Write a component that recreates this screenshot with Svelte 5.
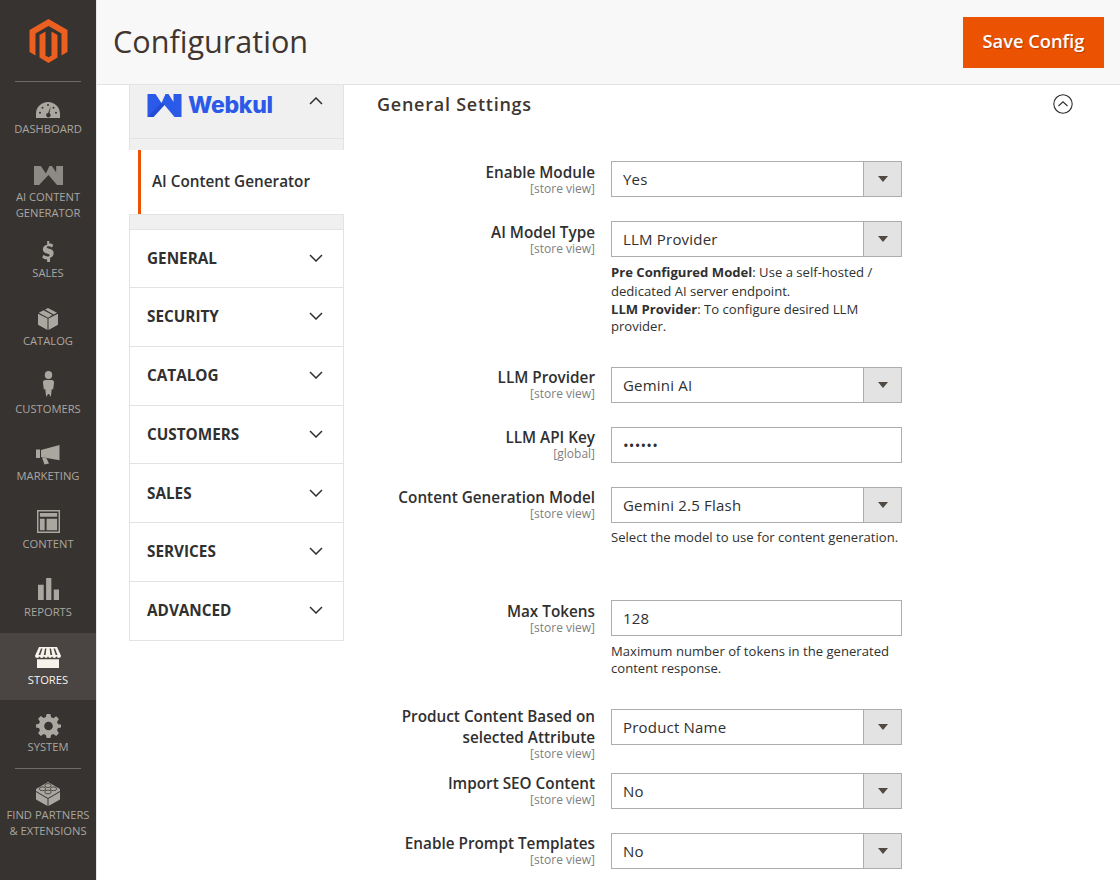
<script lang="ts">
	const wMark = 'M0 0h8l6 9 4-9h3l5 8V0h8v23h-7L17 11 6 23H0Z';

	const navTop = [
		{ label: 'Dashboard', cls: '', vb: '0 0 24 16', d: 'M12 0C5.4 0 0 5.2 0 11.6V16h24v-4.400C24 5.200 18.600 0 12 0ZM4 11.800a1 1 0 1 1 0-2 1 1 0 0 1 0 2Zm2.500-5a1 1 0 1 1 0-2 1 1 0 0 1 0 2ZM12 4a1 1 0 1 1 0-2 1 1 0 0 1 0 2Zm5.500 2.800a1 1 0 1 1 0-2 1 1 0 0 1 0 2ZM20 11.800a1 1 0 1 1 0-2 1 1 0 0 1 0 2ZM14.800 4.500l-1.300 6.800a2.200 2.200 0 1 1-3.200 2.400 2.200 2.200 0 0 1 1.800-2.800Z', w: 24, h: 16 },
		{ label: 'AI Content Generator', cls: 'two', vb: '0 0 34 23', d: wMark, w: 29, h: 19 },
		{ label: 'Sales', cls: '', vb: '0 0 14 24', d: 'M6 0h2.400v2.600c1.900.2 3.500.8 4.800 1.700l-1.500 3c-1.300-.9-2.700-1.400-4.100-1.400-1.300 0-2 .4-2 1.200 0 .8.900 1.200 3 1.800 3 .8 5 2.100 5 5 0 2.800-1.900 4.600-4.200 5.100V24H6v-2.800c-2.300-.2-4.300-1.100-5.800-2.400l1.700-3c1.500 1.200 3.100 1.900 4.800 1.900 1.400 0 2.200-.5 2.200-1.400 0-.9-.8-1.300-3.100-2C2.700 13.500 1 12.100 1 9.300c0-2.700 2-4.500 5-5Z', w: 12, h: 21 },
		{ label: 'Catalog', cls: '', vb: '0 0 20 23', d: 'M9.500 11V23L0 17.500V6ZM10.500 11 20 6v11.500L10.500 23ZM.8 5 5.500 2.400l9 5-4.500 2.800ZM7 1.500 10 0l9 5-3.300 1.800Z', w: 20, h: 22 },
		{ label: 'Customers', cls: '', vb: '0 0 14 26', d: 'M7 0a4 4 0 1 1 0 8 4 4 0 0 1 0-8ZM3.500 9h7c1.500 0 2.500 1 2.500 2.500l-1 7-1.500-.5-1 8-2-3H6.500l-2 3-1-8-1.500.5-1-7C1 10 2 9 3.500 9Z', w: 13, h: 26 },
		{ label: 'Marketing', cls: '', vb: '0 0 24 20', d: 'M0 4.500h4V13H0ZM5 5 23.500 0V15.300L5 12ZM6 12.500 8.500 19.500 13 18.500 10.500 13.300Z', w: 24, h: 20 },
		{ label: 'Content', cls: '', vb: '0 0 24 24', d: 'M0 0h24v24H0ZM1.500 1.500v21h21v-21ZM3 3h18v4H3ZM3 9h5v12H3ZM10 9h11v12H10Z', w: 23, h: 23 },
		{ label: 'Reports', cls: '', vb: '0 0 22 23', d: 'M0 7h6v16H0ZM8.500 0h5.500v23H8.500ZM16.500 12H22v11h-5.500Z', w: 21, h: 22 },
		{ label: 'Stores', cls: 'active', vb: '0 0 26 24', d: 'M4 0h18l4 10c0 1.500-1 2.500-2.200 2.500S21.500 11.500 21.500 10c0 1.500-1 2.500-2.200 2.500S17 11.500 17 10c0 1.500-1 2.500-2 2.500S13 11.500 13 10c0 1.500-1 2.500-2 2.500S9 11.500 9 10c0 1.500-1 2.500-2.300 2.500S4.500 11.500 4.500 10c0 1.500-1 2.500-2.300 2.500S0 11.500 0 10ZM2 14h22v10H2ZM6 1.800 3.500 9h1.800L7.500 1.800ZM10 1.800 8.800 9h1.800l.8-7.200ZM14.600 1.800l.8 7.200h1.800L16 1.800ZM18.500 1.800 20.700 9h1.800L20 1.800Z', w: 26, h: 21 },
		{ label: 'System', cls: 'sys', vb: '-1 -1 26 26', d: 'M10 0h4l.7 3.400 2.300 1 3-1.900 2.800 2.800-1.900 3 1 2.300L25 11v3l-3.100.7-1 2.300 1.900 3-2.800 2.800-3-1.900-2.300 1L14 25h-4l-.7-3.100-2.300-1-3 1.900-2.800-2.800 1.900-3-1-2.300L-1 14v-3l3.100-.7 1-2.300-1.900-3L4 2.200l3 1.900 2.300-1ZM12 8a4.500 4.500 0 1 0 0 9 4.500 4.500 0 0 0 0-9Z', w: 25, h: 25 }
	];

	const studs = [
		[12, 3.5],
		[6.5, 6.8],
		[17.5, 6.8],
		[12, 10]
	];

	const sections = ['General', 'Security', 'Catalog', 'Customers', 'Sales', 'Services', 'Advanced'];

	const rows = [
		{ label: 'Enable Module', scope: 'store view', value: 'Yes', type: 'select', cls: '' },
		{ label: 'AI Model Type', scope: 'store view', value: 'LLM Provider', type: 'select', cls: 'after-html' },
		{ label: 'LLM Provider', scope: 'store view', value: 'Gemini AI', type: 'select', cls: '' },
		{ label: 'LLM API Key', scope: 'global', value: '••••••', type: 'input', cls: '' },
		{ label: 'Content Generation Model', scope: 'store view', value: 'Gemini 2.5 Flash', type: 'select', note: 'Select the model to use for content generation.', cls: 'after-model' },
		{ label: 'Max Tokens', scope: 'store view', value: '128', type: 'input', note: 'Maximum number of tokens in the generated content response.', cls: 'after-tokens' },
		{ label: 'Product Content Based on selected Attribute', scope: 'store view', value: 'Product Name', type: 'select', cls: 'after-attr' },
		{ label: 'Import SEO Content', scope: 'store view', value: 'No', type: 'select', cls: '' },
		{ label: 'Enable Prompt Templates', scope: 'store view', value: 'No', type: 'select', cls: '' }
	];
</script>

<div class="page">
	<nav class="sidebar">
		<div class="logo">
			<svg viewBox="0 0 38 44" width="39" height="44" aria-label="Magento">
				<path fill="#eb5f20" d="M19 0 38 11v22l-6 3.500V14.500L19 7 6 14.500v22L0 33V11Z" />
				<path fill="#eb5f20" d="M10 16l6-3.500v24l3 1.700 3-1.700v-24l6 3.500v22.500L19 44l-9-5.500Z" />
			</svg>
		</div>
		<ul class="nav-list">
			{#each navTop as item}
				<li class="nav-item {item.cls}">
					<div class="nav-icon">
						<svg viewBox={item.vb} width={item.w} height={item.h} preserveAspectRatio="none">
							<path fill="currentColor" fill-rule="evenodd" d={item.d} />
						</svg>
					</div>
					<span>{item.label}</span>
				</li>
			{/each}
			<li class="nav-item partners">
				<div class="nav-icon">
					<svg viewBox="0 0 24 25" width="24" height="25">
						<path fill="currentColor" d="M12 1 24 8v2L12 17 0 10V8ZM0 11l11.500 6.700V25L0 18.500ZM24 11l-11.500 6.700V25L24 18.500Z" />
						{#each studs as [x, y]}
							<ellipse cx={x} cy={y + 1} rx="3.200" ry="1.900" fill="currentColor" stroke="#373330" stroke-width="0.800" />
						{/each}
					</svg>
				</div>
				<span>Find Partners<br />&amp; Extensions</span>
			</li>
		</ul>
	</nav>

	<div class="main">
		<header class="topbar">
			<h1>Configuration</h1>
			<button class="save">Save Config</button>
		</header>

		<div class="columns">
			<aside class="tabs">
				<div class="tab-brand">
					<div class="brand">
						<svg viewBox="0 0 34 23" width="35" height="23">
							<path fill="#2b59e8" d={wMark} />
							<path fill="#1c3fc4" opacity="0.5" d="M0 23 14 9l3 2L6 23Z" />
						</svg>
						<span>Webkul</span>
					</div>
					<svg class="chev" viewBox="0 0 14 8" width="14" height="8">
						<path d="M1 7l6-6 6 6" fill="none" stroke="#303030" stroke-width="1.500" />
					</svg>
				</div>
				<div class="strip"></div>
				<div class="tab-active">AI Content Generator</div>
				<div class="strip lower"></div>
				{#each sections as s}
					<div class="tab">
						<span>{s}</span>
						<svg class="chev" viewBox="0 0 14 8" width="14" height="8">
							<path d="M1 1l6 6 6-6" fill="none" stroke="#303030" stroke-width="1.500" />
						</svg>
					</div>
				{/each}
			</aside>

			<section class="content">
				<div class="section-head">
					<h2>General Settings</h2>
					<svg viewBox="0 0 20 20" width="20" height="20">
						<circle cx="10" cy="10" r="9.200" fill="none" stroke="#303030" stroke-width="1.100" />
						<path d="M5.500 12 10 7.800l4.500 4.200" fill="none" stroke="#303030" stroke-width="1.200" />
					</svg>
				</div>

				<div class="form">
					{#each rows as r, i}
						<div class="row {r.cls}">
							<div class="label">
								<label for="field-{i}">{r.label}</label>
								<small>[{r.scope}]</small>
							</div>
							<div class="field">
								{#if r.type === 'select'}
									<div class="select" id="field-{i}">
										<span>{r.value}</span>
										<div class="arrow"><i></i></div>
									</div>
								{:else}
									<div class="input" id="field-{i}">{r.value}</div>
								{/if}
								{#if r.label === 'AI Model Type'}
									<p class="note html">
										<strong>Pre Configured Model</strong>: Use a self-hosted / dedicated AI server endpoint.<br />
										<strong>LLM Provider</strong>: To configure desired LLM provider.
									</p>
								{:else if r.note}
									<p class="note">{r.note}</p>
								{/if}
							</div>
						</div>
					{/each}
				</div>
			</section>
		</div>
	</div>
</div>

<style>
	:global(body) {
		margin: 0;
		background: #fff;
		overflow: hidden;
	}

	.page {
		display: flex;
		height: 880px;
		overflow: hidden;
		font-family: 'Open Sans', sans-serif;
		color: #303030;
	}

	.sidebar {
		width: 96px;
		flex: none;
		background: #373330;
		color: #aaa6a0;
		border-right: 1px solid #e6e6e6;
	}

	.logo {
		height: 81px;
		padding-top: 19px;
		box-sizing: border-box;
		display: flex;
		justify-content: center;
		align-items: flex-start;
	}

	.nav-list {
		list-style: none;
		margin: 0;
		padding: 0;
	}

	.nav-list::before {
		content: '';
		display: block;
		height: 1px;
		margin: 0 15px;
		background: #6f6b67;
	}

	.nav-item {
		height: 67.700px;
		display: flex;
		flex-direction: column;
		align-items: center;
		text-transform: uppercase;
		font-size: 11.200px;
		line-height: 16px;
		text-align: center;
	}

	.nav-item.two {
		height: 76.700px;
	}

	.nav-item.two svg {
		opacity: 0.75;
	}

	.nav-icon {
		height: 35.500px;
		margin-bottom: 3.500px;
		display: flex;
		align-items: flex-end;
		justify-content: center;
		flex: none;
	}

	.nav-item.sys .nav-icon {
		height: 38px;
		margin-bottom: 1px;
	}

	.nav-item.active {
		background: #4a4542;
		color: #f7f3eb;
	}

	.nav-item.partners {
		height: 100px;
		position: relative;
		padding-top: 13px;
	}

	.nav-item.partners::before {
		content: '';
		position: absolute;
		top: 0;
		left: 15px;
		right: 15px;
		height: 1px;
		background: #6f6b67;
	}

	.nav-item.partners .nav-icon {
		height: 25px;
		margin-bottom: 1px;
	}

	.main {
		flex: 1;
		min-width: 0;
	}

	.topbar {
		height: 85px;
		box-sizing: border-box;
		background: #f8f8f8;
		border-bottom: 1px solid #e3e3e3;
		display: flex;
		align-items: center;
		justify-content: space-between;
		padding: 0 16px;
	}

	h1 {
		margin: 0 0 2px;
		font-size: 30.600px;
		font-weight: 400;
		color: #41362f;
	}

	.save {
		width: 141px;
		height: 51px;
		border: 0;
		padding: 0 0 4px;
		background: #eb5202;
		color: #fff;
		font: 600 18.300px 'Open Sans', sans-serif;
		text-shadow: 1px 1px 1px rgba(0, 0, 0, 0.25);
	}

	.columns {
		display: flex;
		padding-left: 32px;
	}

	.tabs {
		width: 215px;
		flex: none;
	}

	.tab-brand {
		height: 54px;
		background: #f0f0f0;
		display: flex;
		align-items: flex-start;
		justify-content: space-between;
		padding: 7px 20px 0 17px;
		box-sizing: border-box;
		border-left: 1px solid #e3e3e3;
		border-right: 1px solid #e3e3e3;
		border-bottom: 1px solid #e3e3e3;
	}

	.brand {
		display: flex;
		align-items: center;
		gap: 6px;
		color: #2b59e8;
		font: 800 23px Inter, sans-serif;
		letter-spacing: -0.3px;
		line-height: 26px;
	}

	.tab-brand .chev {
		margin-top: 5px;
	}

	.strip {
		height: 11px;
		background: #f0f0f0;
		border-left: 1px solid #e3e3e3;
		border-right: 1px solid #e3e3e3;
	}

	.strip.lower {
		height: 15px;
		border-top: 1px solid #e3e3e3;
		box-sizing: border-box;
	}

	.tab-active {
		height: 64px;
		box-sizing: border-box;
		margin-left: 9px;
		padding: 0 0 3px 11px;
		border-left: 3px solid #eb5202;
		display: flex;
		align-items: center;
		background: #fff;
		font-size: 15.300px;
		font-weight: 600;
		color: #303030;
	}

	.tab {
		height: 58.860px;
		box-sizing: border-box;
		border: 1px solid #e3e3e3;
		border-top: 0;
		display: flex;
		align-items: center;
		justify-content: space-between;
		padding: 0 20px 1.500px 17px;
		font-size: 15.300px;
		font-weight: 700;
		text-transform: uppercase;
		color: #303030;
	}

	.strip.lower + .tab {
		border-top: 1px solid #e3e3e3;
	}

	.content {
		flex: 1;
		min-width: 0;
		padding-left: 33px;
	}

	.section-head {
		height: 38px;
		display: flex;
		align-items: center;
		justify-content: space-between;
		padding-right: 47px;
	}

	h2 {
		margin: 0;
		font-size: 18px;
		font-weight: 600;
		color: #41362f;
		letter-spacing: 0.75px;
	}

	.form {
		margin-top: 38px;
	}

	.row {
		display: flex;
		gap: 16px;
		margin-bottom: 24px;
	}

	.row.after-html {
		margin-bottom: 31px;
	}

	.row.after-model {
		margin-bottom: 53.500px;
	}

	.row.after-tokens {
		margin-bottom: 30.500px;
	}

	.row.after-attr {
		margin-bottom: 13px;
	}

	.row.after-attr .label {
		margin-top: -3px;
	}

	.label {
		width: 218px;
		flex: none;
		text-align: right;
		padding-top: 0.5px;
	}

	.label label {
		display: block;
		font-size: 15.300px;
		font-weight: 600;
		line-height: 21px;
		color: #303030;
	}

	.label small {
		display: block;
		font-size: 12px;
		line-height: 11.500px;
		color: #808080;
	}

	.field {
		width: 291px;
		flex: none;
	}

	.select,
	.input {
		height: 36px;
		box-sizing: border-box;
		border: 1px solid #adadad;
		background: #fff;
		font-size: 15px;
		color: #303030;
		display: flex;
		align-items: center;
		justify-content: space-between;
		letter-spacing: 0.2px;
	}

	.select span,
	.input {
		padding-left: 11px;
	}

	.arrow {
		width: 38px;
		height: 100%;
		box-sizing: border-box;
		background: #e3e3e3;
		border-left: 1px solid #adadad;
		display: flex;
		align-items: center;
		justify-content: center;
	}

	.arrow i {
		width: 0;
		height: 0;
		border-left: 5px solid transparent;
		border-right: 5px solid transparent;
		border-top: 6px solid #514943;
	}

	.note {
		margin: 6.500px 0 0;
		font-size: 13.100px;
		line-height: 17.600px;
		color: #303030;
	}

	.note.html {
		margin-top: 4px;
	}

	.note.html::first-line {
		line-height: 22px;
	}

	.note strong {
		font-weight: 700;
	}
</style>
